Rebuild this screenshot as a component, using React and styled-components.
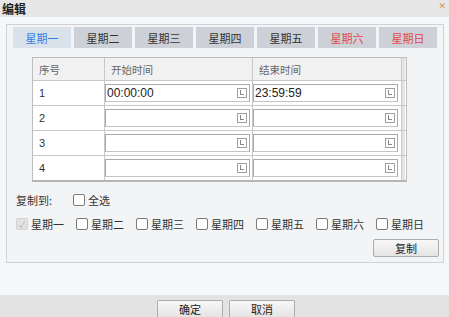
import React from 'react'
import styled, { createGlobalStyle } from 'styled-components'

const GlobalStyle = createGlobalStyle`
  html, body {
    margin: 0;
    padding: 0;
    background: #f4f5f7;
  }
  body {
    font-family: "Noto Sans CJK SC", "Noto Sans", sans-serif;
    font-size: 11px;
    color: #333;
  }
`

const Dialog = styled.div`
  width: 449px;
  height: 317px;
  display: flex;
  flex-direction: column;
  background: #f6f7f9;
  overflow: hidden;
`

const TitleBar = styled.div`
  height: 17px;
  display: flex;
  align-items: center;
  justify-content: space-between;
  padding: 0 2px 0 2px;
  background: #e7e7e7;
  font-weight: bold;
  font-size: 12px;
  color: #222;
`

const Close = styled.span`
  align-self: flex-start;
  color: #d39a4a;
  font-family: "DejaVu Sans", sans-serif;
  font-size: 9px;
  font-weight: normal;
  line-height: 11px;
  margin-top: 1px;
  margin-right: 1px;
`

const Body = styled.div`
  flex: 1;
  padding: 7px 5px 0 6px;
`

const Panel = styled.div`
  height: 239px;
  border: 1px solid #cfd1d4;
  background: #f3f4f6;
  padding: 2px 4px 0 6px;
  box-sizing: border-box;
  display: flex;
  flex-direction: column;
`

const Tabs = styled.div`
  display: flex;
  gap: 3px;
`

const Tab = styled.div`
  width: 58px;
  height: 21px;
  display: flex;
  align-items: center;
  justify-content: center;
  background: ${p => (p.$active ? '#d9e1ea' : '#cdd1d7')};
  color: ${p => (p.$active ? '#2e7fe4' : p.$weekend ? '#e0494c' : '#333')};
  font-size: 11px;
`

const Table = styled.div`
  margin: 9px 0 0 19px;
  width: 373px;
  border: 1px solid #bdbdbd;
  border-bottom: 2px solid #b5b5b5;
  background: #fff;
`

const Row = styled.div`
  display: grid;
  grid-template-columns: 72px 148px 149px 3px;
  height: ${p => (p.$head ? '22px' : '25px')};
  background: ${p => (p.$head ? '#f1f1f1' : '#fff')};
  border-top: ${p => (p.$head ? 'none' : '1px solid #c8c8c8')};
  box-sizing: border-box;
`

const Cell = styled.div`
  display: flex;
  align-items: center;
  padding-left: ${p => (p.$input ? '0' : '6px')};
  border-right: 1px solid #c8c8c8;
  color: ${p => (p.$head ? '#666' : '#333')};
  font-size: ${p => (p.$num ? '11px' : '10.5px')};
  font-family: ${p => (p.$num ? '"Liberation Sans", sans-serif' : 'inherit')};
`

const Filler = styled.div`
  background: #e4e4e4;
`

const TimeInput = styled.div`
  width: 145px;
  height: 18px;
  box-sizing: border-box;
  border: 1px solid #a9a9a9;
  border-bottom-color: #c4c4c4;
  background: #fff;
  display: flex;
  align-items: center;
  padding: 0 2px 0 1px;
  font-family: "Liberation Sans", sans-serif;
  font-size: 12px;
  color: #222;
`

const Clock = styled.span`
  width: 8px;
  height: 8px;
  margin-left: auto;
  border: 1px solid #a0a0a0;
  position: relative;
  &::after {
    content: '';
    position: absolute;
    left: 2px;
    top: 1px;
    width: 3px;
    height: 4px;
    border-left: 1px solid #888;
    border-bottom: 1px solid #888;
  }
`

const OptionRow = styled.div`
  display: flex;
  align-items: center;
  height: 16px;
  margin-top: ${p => p.$mt}px;
  padding-left: 3px;
`

const Label = styled.span`
  width: 57px;
  font-size: 11px;
  color: #333;
`

const Check = styled.label`
  display: flex;
  align-items: center;
  gap: 3px;
  width: 60px;
  font-size: 11px;
  color: #333;
`

const Box = styled.span`
  width: 10px;
  height: 10px;
  border: 1px solid ${p => (p.$disabled ? '#d2d2d2' : '#7a7a7a')};
  border-radius: 2px;
  background: ${p => (p.$disabled ? '#e2e2e2' : '#fff')};
  display: flex;
  align-items: center;
  justify-content: center;
  color: #b8b8b8;
  font-size: 9px;
  line-height: 1;
`

const ActionRow = styled.div`
  display: flex;
  justify-content: flex-end;
  margin-top: 7px;
`

const Button = styled.div`
  width: 66px;
  height: 18px;
  box-sizing: border-box;
  border: 1px solid #adadad;
  border-radius: 2px;
  background: linear-gradient(#f8f8f8, #e4e4e4);
  display: flex;
  align-items: center;
  justify-content: center;
  font-size: 11px;
  color: #222;
`

const Footer = styled.div`
  height: 22px;
  background: #e3e3e3;
  display: flex;
  justify-content: center;
  align-items: flex-end;
  gap: 6px;
  padding-left: 3px;
`

const FooterButton = styled(Button)`
  height: 17px;
  border-bottom: none;
  border-radius: 2px 2px 0 0;
`

const days = ['星期一', '星期二', '星期三', '星期四', '星期五', '星期六', '星期日']
const rows = [
  ['1', '00:00:00', '23:59:59'],
  ['2', '', ''],
  ['3', '', ''],
  ['4', '', ''],
]

export default function App() {
  return (
    <>
      <GlobalStyle />
      <Dialog>
        <TitleBar>
          <span>编辑</span>
          <Close>✕</Close>
        </TitleBar>
        <Body>
          <Panel>
            <Tabs>
              {days.map((d, i) => (
                <Tab key={d} $active={i === 0} $weekend={i > 4}>{d}</Tab>
              ))}
            </Tabs>
            <Table>
              <Row $head>
                <Cell $head>序号</Cell>
                <Cell $head>开始时间</Cell>
                <Cell $head>结束时间</Cell>
                <Filler />
              </Row>
              {rows.map(([n, start, end]) => (
                <Row key={n}>
                  <Cell $num>{n}</Cell>
                  <Cell $input>
                    <TimeInput>{start}<Clock /></TimeInput>
                  </Cell>
                  <Cell $input>
                    <TimeInput>{end}<Clock /></TimeInput>
                  </Cell>
                  <Filler />
                </Row>
              ))}
            </Table>
            <OptionRow $mt={10}>
              <Label>复制到:</Label>
              <Check><Box />全选</Check>
            </OptionRow>
            <OptionRow $mt={8}>
              {days.map((d, i) => (
                <Check key={d}>
                  <Box $disabled={i === 0}>{i === 0 ? '✓' : ''}</Box>
                  {d}
                </Check>
              ))}
            </OptionRow>
            <ActionRow>
              <Button>复制</Button>
            </ActionRow>
          </Panel>
        </Body>
        <Footer>
          <FooterButton>确定</FooterButton>
          <FooterButton>取消</FooterButton>
        </Footer>
      </Dialog>
    </>
  )
}
